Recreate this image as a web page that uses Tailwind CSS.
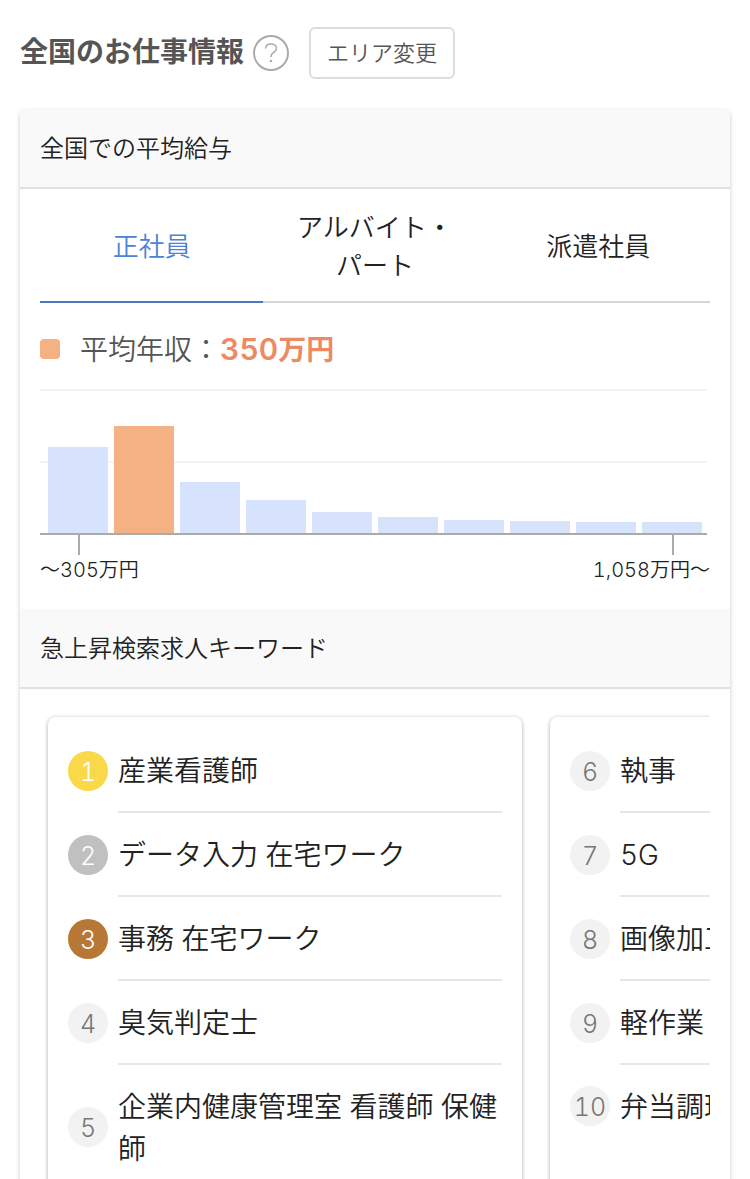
<!DOCTYPE html>
<html lang="ja">
<head>
<meta charset="utf-8">
<meta name="viewport" content="width=device-width, initial-scale=1">
<title>全国のお仕事情報</title>
<script src="https://cdn.jsdelivr.net/npm/@tailwindcss/browser@4"></script>
</head>
<body class="bg-white font-['Inter','Noto_Sans_CJK_JP',sans-serif] font-[350] tabular-nums text-[#222]">
<main class="px-5 pt-[27px] pb-10">
  <header class="flex items-center">
    <h1 class="text-[28px] leading-[48px] font-bold text-[#555] pb-[2px]">全国のお仕事情報</h1>
    <button type="button" aria-label="ヘルプ" class="ml-[9px] size-9 shrink-0 rounded-full border-2 border-[#aaa] text-[#aaa] flex items-center justify-center">
      <svg class="w-4 h-5" viewBox="0 0 16 20" fill="none" stroke="currentColor" stroke-width="1.5" aria-hidden="true"><path d="M2.500 5.500C2.700 2.500 4.900 .9 8 .9C11.200 .9 13.500 2.700 13.500 5.300C13.500 7.200 12.400 8.300 10.700 9.300C8.600 10.600 8 11.500 8 14"/><circle cx="8" cy="18" r="1.300" fill="currentColor" stroke="none"/></svg>
    </button>
    <button type="button" class="ml-5 h-[52px] rounded-md border-2 border-[#ddd] px-4 text-[22px] text-[#555]">エリア変更</button>
  </header>

  <div class="mt-[30px] rounded-md shadow-[0_2px_4px_rgba(0,0,0,0.22)]">
    <section>
      <h2 class="flex h-20 items-center rounded-t-md border-b-2 border-[#e0e0e0] bg-[#f9f9f9] px-5 pt-[2px] text-2xl">全国での平均給与</h2>
      <div class="px-5">
        <div role="tablist" class="grid grid-cols-3 text-[26px] leading-[38px]">
          <button type="button" role="tab" aria-selected="true" class="border-b-2 border-[#4a78be] pt-5 pb-4 text-[#4a83d8]">正社員</button>
          <button type="button" role="tab" aria-selected="false" class="border-b-2 border-[#d6d6d6] pt-5 pb-4">アルバイト・<br>パート</button>
          <button type="button" role="tab" aria-selected="false" class="border-b-2 border-[#d6d6d6] pt-5 pb-4">派遣社員</button>
        </div>
        <p class="flex h-[86px] items-center pt-[6px] text-[28px] leading-[42px] text-[#555]">
          <span class="mr-5 size-5 shrink-0 rounded bg-[#f4b183]"></span>
          <span>平均年収：<strong class="font-semibold text-[#ec8a63]"><span class="text-[30px]">350</span>万円</strong></span>
        </p>
        <div class="relative mr-[3px] h-[146px] border-t-2 border-b-2 border-t-[#f4f4f4] border-b-[#aaa]">
          <div class="absolute inset-x-0 top-[70px] h-[2px] bg-[#f4f4f4]"></div>
          <div class="relative flex h-full items-end gap-[6px] pr-[5px] pl-2">
            <div class="flex-1 bg-[#d0defc]/85" style="height:86px"></div>
            <div class="flex-1 bg-[#f4b183]" style="height:107px"></div>
            <div class="flex-1 bg-[#d0defc]/85" style="height:51px"></div>
            <div class="flex-1 bg-[#d0defc]/85" style="height:33px"></div>
            <div class="flex-1 bg-[#d0defc]/85" style="height:21px"></div>
            <div class="flex-1 bg-[#d0defc]/85" style="height:16px"></div>
            <div class="flex-1 bg-[#d0defc]/85" style="height:13px"></div>
            <div class="flex-1 bg-[#d0defc]/85" style="height:12px"></div>
            <div class="flex-1 bg-[#d0defc]/85" style="height:11px"></div>
            <div class="flex-1 bg-[#d0defc]/85" style="height:11px"></div>
          </div>
        </div>
        <div class="flex justify-between pr-9 pl-[38px]">
          <span class="h-5 w-[2px] bg-[#aaa]"></span>
          <span class="h-5 w-[2px] bg-[#aaa]"></span>
        </div>
        <div class="flex justify-between pt-px pb-[25px] text-xl leading-7">
          <span>〜305万円</span>
          <span>1,058万円〜</span>
        </div>
      </div>
    </section>

    <section>
      <h2 class="flex h-20 items-center border-b-2 border-[#e0e0e0] bg-[#f9f9f9] px-5 pt-[2px] text-2xl">急上昇検索求人キーワード</h2>
      <div class="px-5 pb-5">
        <div class="flex gap-7 overflow-x-auto px-2 pt-7 pb-2 text-[28px] leading-[42px] [scrollbar-width:none]">
          <ol class="w-[474px] shrink-0 rounded-lg px-5 pt-3 pb-5 shadow-[0_1px_4px_rgba(0,0,0,0.35)]">
            <li class="flex items-center gap-[10px]"><span class="flex size-10 shrink-0 items-center justify-center rounded-full bg-[#f9d849] pt-[2px] text-[25px] text-white">1</span><a href="#" class="flex-1 border-b-2 border-[#e6e6e6] pt-[21px] pb-[19px]">産業看護師</a></li>
            <li class="flex items-center gap-[10px]"><span class="flex size-10 shrink-0 items-center justify-center rounded-full bg-[#c0c0c0] pt-[2px] text-[25px] text-white">2</span><a href="#" class="flex-1 border-b-2 border-[#e6e6e6] pt-[21px] pb-[19px]">データ入力 在宅ワーク</a></li>
            <li class="flex items-center gap-[10px]"><span class="flex size-10 shrink-0 items-center justify-center rounded-full bg-[#b87835] pt-[2px] text-[25px] text-white">3</span><a href="#" class="flex-1 border-b-2 border-[#e6e6e6] pt-[21px] pb-[19px]">事務 在宅ワーク</a></li>
            <li class="flex items-center gap-[10px]"><span class="flex size-10 shrink-0 items-center justify-center rounded-full bg-[#f2f2f2] pt-[2px] text-[25px] text-[#777]">4</span><a href="#" class="flex-1 border-b-2 border-[#e6e6e6] pt-[21px] pb-[19px]">臭気判定士</a></li>
            <li class="flex items-center gap-[10px]"><span class="flex size-10 shrink-0 items-center justify-center rounded-full bg-[#f2f2f2] pt-[2px] text-[25px] text-[#777]">5</span><a href="#" class="flex-1 pt-[21px] pb-[19px]">企業内健康管理室 看護師 保健師</a></li>
          </ol>
          <ol start="6" class="w-[474px] shrink-0 rounded-lg px-5 pt-3 pb-5 shadow-[0_1px_4px_rgba(0,0,0,0.35)]">
            <li class="flex items-center gap-[10px]"><span class="flex size-10 shrink-0 items-center justify-center rounded-full bg-[#f2f2f2] pt-[2px] text-[25px] text-[#777]">6</span><a href="#" class="flex-1 border-b-2 border-[#e6e6e6] pt-[21px] pb-[19px]">執事</a></li>
            <li class="flex items-center gap-[10px]"><span class="flex size-10 shrink-0 items-center justify-center rounded-full bg-[#f2f2f2] pt-[2px] text-[25px] text-[#777]">7</span><a href="#" class="flex-1 border-b-2 border-[#e6e6e6] pt-[21px] pb-[19px]">5G</a></li>
            <li class="flex items-center gap-[10px]"><span class="flex size-10 shrink-0 items-center justify-center rounded-full bg-[#f2f2f2] pt-[2px] text-[25px] text-[#777]">8</span><a href="#" class="flex-1 border-b-2 border-[#e6e6e6] pt-[21px] pb-[19px]">画像加工</a></li>
            <li class="flex items-center gap-[10px]"><span class="flex size-10 shrink-0 items-center justify-center rounded-full bg-[#f2f2f2] pt-[2px] text-[25px] text-[#777]">9</span><a href="#" class="flex-1 border-b-2 border-[#e6e6e6] pt-[21px] pb-[19px]">軽作業</a></li>
            <li class="flex items-center gap-[10px]"><span class="flex size-10 shrink-0 items-center justify-center rounded-full bg-[#f2f2f2] pt-[2px] text-[25px] text-[#777]">10</span><a href="#" class="flex-1 pt-[21px] pb-[19px]">弁当調理</a></li>
          </ol>
        </div>
      </div>
    </section>
  </div>
</main>
</body>
</html>
